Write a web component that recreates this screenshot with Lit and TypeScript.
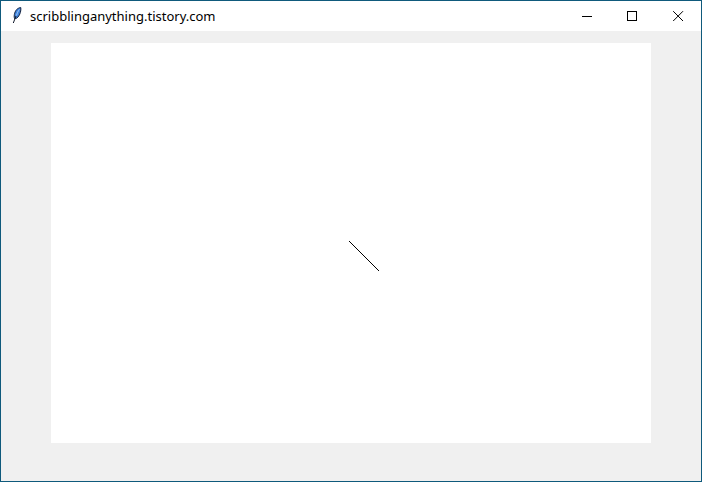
import { LitElement, html, css } from "lit";
import { customElement } from "lit/decorators.js";

@customElement("app-root")
export class AppRoot extends LitElement {
  static styles = css`
    :host {
      display: flex;
      flex-direction: column;
      width: 702px;
      height: 482px;
      box-sizing: border-box;
      border: 1px solid #0f5a7c;
      background: #f0f0f0;
      font-family: "Noto Sans", "Open Sans", sans-serif;
    }
    .titlebar {
      display: flex;
      align-items: center;
      height: 30px;
      background: #fff;
      flex: none;
    }
    .app-icon {
      width: 16px;
      height: 16px;
      margin-left: 8px;
      margin-bottom: 2px;
      flex: none;
    }
    .title {
      margin-left: 5px;
      font-size: 13px;
      color: #000;
      white-space: nowrap;
      flex: 1;
    }
    .controls {
      display: flex;
      flex: none;
      padding-right: 1px;
    }
    .btn {
      box-sizing: border-box;
      width: 45px;
      height: 30px;
      padding-left: 17px;
      display: flex;
      align-items: center;
    }
    .btn.close {
      padding-left: 18px;
    }
    .btn svg {
      width: 11px;
      height: 11px;
      display: block;
    }
    .content {
      flex: 1;
      padding: 12px 50px;
    }
    .canvas {
      display: block;
      width: 600px;
      height: 400px;
      background: #fff;
    }
  `;

  render() {
    return html`
      <div class="titlebar">
        <svg class="app-icon" viewBox="0 0 16 16">
          <path d="M5.500 11.500 C4.500 8.500 6 3.500 8.500 1.800 C9.800 1 11 0.500 11.800 0.600 C12.200 3.500 11.200 7.500 9 10 C7.800 11.300 6.800 11.800 5.500 11.500 Z" fill="#3f83dc" stroke="#14233f" stroke-width="1"/>
          <path d="M7.500 8.500 C8 6.500 9 4 10.400 2.500" stroke="#a9cdf5" stroke-width="0.9" fill="none"/>
          <path d="M4.300 16 L7 9" stroke="#10182a" stroke-width="1" fill="none"/>
        </svg>
        <div class="title">scribblinganything.tistory.com</div>
        <div class="controls">
          <div class="btn">
            <svg viewBox="0 0 11 11" shape-rendering="crispEdges"><path d="M0 5.500H10" stroke="#000" fill="none"/></svg>
          </div>
          <div class="btn">
            <svg viewBox="0 0 11 11" shape-rendering="crispEdges"><rect x="0.500" y="0.500" width="9" height="9" stroke="#000" fill="none"/></svg>
          </div>
          <div class="btn close">
            <svg viewBox="0 0 11 11"><path d="M0.200 0.200L10 10M10 0.200L0.200 10" stroke="#000" fill="none"/></svg>
          </div>
        </div>
      </div>
      <div class="content">
        <svg class="canvas" viewBox="0 0 600 400" shape-rendering="crispEdges">
          <line x1="298.500" y1="198.500" x2="328.500" y2="228.500" stroke="#000" stroke-width="1"/>
        </svg>
      </div>
    `;
  }
}
